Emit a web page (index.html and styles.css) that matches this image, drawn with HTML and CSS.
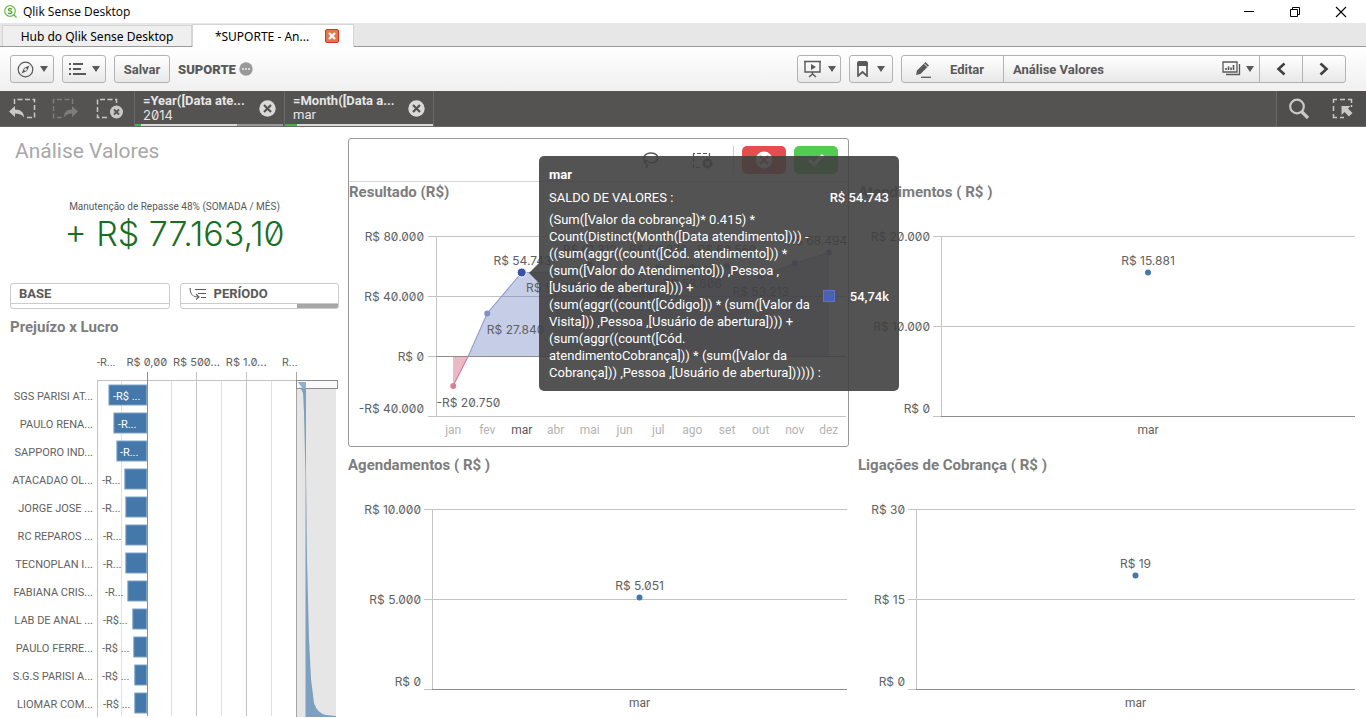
FILE: index.html
```html
<!DOCTYPE html>
<html lang="pt-BR">
<head>
<meta charset="utf-8">
<title>Qlik Sense Desktop</title>
<link rel="stylesheet" href="styles.css">
</head>
<body>
<header class="titlebar">
  <svg class="logo" width="13" height="13" viewBox="0 0 13 13"><circle cx="6" cy="6" r="5.3" fill="#fff" stroke="#6dbb45" stroke-width="1.2"/><path d="M9.5 9.5l3 3" stroke="#6dbb45" stroke-width="1.4"/><path d="M8 4.2C7 3.4 4.4 3.400 4.400 4.700 4.400 6.300 7.900 5.600 7.900 7.300 7.900 8.800 5.200 8.800 4 7.900" fill="none" stroke="#45a32b" stroke-width="1.3"/></svg>
  <span class="titlebar-text">Qlik Sense Desktop</span>
  <div class="window-controls">
    <button aria-label="Minimizar"><svg width="12" height="12"><path d="M1 5.500h10" stroke="#000"/></svg></button>
    <button aria-label="Restaurar"><svg width="12" height="12"><path d="M1.500 3.500h7v7h-7zM3.500 3.500v-2h7v7h-2" fill="none" stroke="#000"/></svg></button>
    <button aria-label="Fechar"><svg width="12" height="12"><path d="M1 1l10 10M11 1L1 11" stroke="#000" stroke-width="1.100"/></svg></button>
  </div>
</header>

<nav class="tabs">
  <a class="tab" href="#hub">Hub do Qlik Sense Desktop</a>
  <div class="tab tab-active"><a href="#suporte">*SUPORTE - An...</a>
    <button class="tab-close" aria-label="Fechar guia"><svg width="14" height="14"><rect x=".5" y=".5" width="13" height="13" rx="1.500" fill="#e5774f" stroke="#d9301f"/><path d="M4 4l6 6M10 4l-6 6" stroke="#fff" stroke-width="2.200"/></svg></button>
  </div>
</nav>

<div class="toolbar">
  <button class="btn btn-icon" aria-label="Navegação">
    <svg width="17" height="17"><circle cx="8.500" cy="8.500" r="7.300" fill="none" stroke="#595959" stroke-width="1.200"/><path d="M12.500 4.500L10 10 4.500 12.500 7 7z" fill="#595959"/><circle cx="8.500" cy="8.500" r="1.300" fill="#f8f8f8"/></svg>
    <svg class="caret" width="8" height="6"><path d="M0 0h8L4 6z"/></svg>
  </button>
  <button class="btn btn-icon" aria-label="Menu">
    <svg width="17" height="14"><path d="M0 2h2M0 7h2M0 12h2" stroke="#595959" stroke-width="2"/><path d="M4 2h10M4 7h8M4 12h13" stroke="#595959" stroke-width="2"/></svg>
    <svg class="caret" width="8" height="6"><path d="M0 0h8L4 6z"/></svg>
  </button>
  <button class="btn btn-text">Salvar</button>
  <strong class="app-name">SUPORTE</strong>
  <svg class="more" width="14" height="14"><circle cx="7" cy="7" r="6.700" fill="#999"/><path d="M3 7h8" stroke="#eee" stroke-width="1.500" stroke-dasharray="2 1"/></svg>
  <span class="spacer"></span>
  <button class="btn btn-icon" aria-label="Apresentação">
    <svg width="19" height="18"><path d="M1 1.500h17M2 2v10h15V2M9.500 12v3M6 17l3.500-3 3.500 3" fill="none" stroke="#595959" stroke-width="1.400"/><path d="M8 4l5 3-5 3z" fill="#595959"/></svg>
    <svg class="caret" width="8" height="6"><path d="M0 0h8L4 6z"/></svg>
  </button>
  <button class="btn btn-icon btn-bookmark" aria-label="Marcadores">
    <svg width="11" height="16"><path d="M1 3v12l4.500-4 4.500 4V3" fill="none" stroke="#595959" stroke-width="1.700"/><path d="M0 5V2q0-2 2-2h7q2 0 2 2v3z" fill="#595959"/></svg>
    <svg class="caret" width="8" height="6"><path d="M0 0h8L4 6z"/></svg>
  </button>
  <div class="btn-group">
    <button class="group-edit"><svg width="17" height="17"><path d="M1 14l1-4.500L10.500 1l3.500 3.500L5.500 13z" fill="#595959"/><path d="M9 2.500L12.500 6" stroke="#f8f8f8"/><path d="M6 16.300h10" stroke="#595959" stroke-width="1.300"/></svg>Editar</button>
    <button class="group-sheet"><span>Análise Valores</span>
      <svg width="20" height="16"><path d="M1 1h14v10H1zM4 13.500h13.500V3" fill="none" stroke="#595959" stroke-width="1.300"/><path d="M4 9V7M6.500 9V5.500M9 9V6.500M11.500 9V4" stroke="#595959" stroke-width="1.600"/></svg>
      <svg class="caret" width="8" height="6"><path d="M0 0h8L4 6z"/></svg></button>
    <button class="group-nav" aria-label="Anterior"><svg width="10" height="14"><path d="M8.500 1.500L2.500 7l6 5.500" fill="none" stroke="#404040" stroke-width="2.600"/></svg></button>
    <button class="group-nav" aria-label="Próxima"><svg width="10" height="14"><path d="M1.500 1.500L7.500 7l-6 5.500" fill="none" stroke="#404040" stroke-width="2.600"/></svg></button>
  </div>
</div>

<div class="selections">
  <div class="sel-tools">
    <button aria-label="Voltar seleção"><svg width="28" height="22"><path d="M6.500 6V1.500h20v18h-8" fill="none" stroke="#c8c8c8" stroke-width="1.500" stroke-dasharray="5 2.500"/><path d="M7 8v3.500c6 0 9 3 9 8-2-3-5-4-9-4V19L1 13.500z" fill="#c8c8c8"/></svg></button>
    <button aria-label="Avançar seleção"><svg width="28" height="22"><path d="M20.500 6V1.500h-19v18h8" fill="none" stroke="#7d7d7d" stroke-width="1.500" stroke-dasharray="5 2.500"/><path d="M20 8v3.500c-6 0-8 3-8 8 2-3 4-4 8-4V19l6-5.500z" fill="#7d7d7d"/></svg></button>
    <button aria-label="Limpar seleções"><svg width="28" height="22"><path d="M11 19.500H1.500v-18h19V6" fill="none" stroke="#c8c8c8" stroke-width="1.500" stroke-dasharray="5 2.500"/><circle cx="20.500" cy="14" r="6.500" fill="#c8c8c8"/><path d="M18 11.500l5 5M23 11.500l-5 5" stroke="#545352" stroke-width="1.800"/></svg></button>
  </div>
  <div class="sel-item sel-year">
    <div class="sel-text"><strong>=Year([Data ate...</strong><span class="num">2014</span></div>
    <button aria-label="Limpar ano"><svg width="17" height="17"><circle cx="8.500" cy="8.500" r="8.200" fill="#d9d9d9"/><path d="M5 5l7 7M12 5l-7 7" stroke="#545352" stroke-width="2.200"/></svg></button>
  </div>
  <div class="sel-item sel-month">
    <div class="sel-text"><strong>=Month([Data a...</strong><span>mar</span></div>
    <button aria-label="Limpar mês"><svg width="17" height="17"><circle cx="8.500" cy="8.500" r="8.200" fill="#d9d9d9"/><path d="M5 5l7 7M12 5l-7 7" stroke="#545352" stroke-width="2.200"/></svg></button>
  </div>
  <div class="sel-right">
    <button aria-label="Pesquisar"><svg width="22" height="22"><circle cx="9" cy="8.500" r="6.800" fill="none" stroke="#c8c8c8" stroke-width="2.200"/><path d="M13.500 13.500l6.500 6.500" stroke="#c8c8c8" stroke-width="3.200"/></svg></button>
    <button aria-label="Ferramenta de seleções"><svg width="22" height="22"><path d="M5 1.500H1.500V5M8 1.500h5M16 1.500h3.500V5M1.500 8v5M1.500 16v3.500H5M8 19.500h4M19.500 7v2" fill="none" stroke="#c8c8c8" stroke-width="1.500"/><path d="M9.500 8h9l-2.500 2.500 4.500 4.500-3.500 3.500-4.500-4.500-3 3z" fill="#c8c8c8"/></svg></button>
  </div>
</div>

<main class="sheet">
  <section class="col col-left">
    <h1>Análise Valores</h1>
    <div class="kpi">
      <div class="kpi-label">Manutenção de Repasse 48% (SOMADA / MÊS)</div>
      <div class="kpi-value num">+ R$ 77.163,10</div>
    </div>
    <div class="filters">
      <button class="filter">BASE</button>
      <button class="filter filter-period"><svg width="18" height="13"><path d="M1 1c0 6 2 9 9 9M7 7l3 3-3 2.500M6 2.500h11M9 6.500h8M12 10.500h5" fill="none" stroke="#595959" stroke-width="1.100"/></svg>PERÍODO</button>
    </div>
    <h2>Prejuízo x Lucro</h2>
    <div class="barchart">
      <svg class="bar-names" height="380">
        <g class="label end">
          <text x="83" y="63">SGS PARISI AT...</text><text x="83" y="91">PAULO RENA...</text><text x="83" y="119">SAPPORO IND...</text><text x="83" y="147">ATACADAO OL...</text><text x="83" y="175">JORGE JOSE ...</text><text x="83" y="203">RC REPAROS ...</text><text x="83" y="231">TECNOPLAN I...</text><text x="83" y="259">FABIANA CRIS...</text><text x="83" y="287">LAB DE ANAL ...</text><text x="83" y="315">PAULO FERRE...</text><text x="83" y="343">S.G.S PARISI A...</text><text x="83" y="371">LIOMAR COM...</text>
        </g>
      </svg>
      <svg class="bar-plot" height="380">
        <g class="crisp">
          <path d="M.5 43.500v336" class="grid"/>
          <line class="grid" x1="0" x2="100%" y1="43.500" y2="43.500"/>
          <g class="grid-minor"><line x1="12.500%" x2="12.500%" y1="44" y2="379"/><line x1="37.500%" x2="37.500%" y1="44" y2="379"/><line x1="62.500%" x2="62.500%" y1="44" y2="379"/><line x1="87.500%" x2="87.500%" y1="44" y2="379"/></g>
          <g class="grid"><line x1="50%" x2="50%" y1="35" y2="379"/><line x1="75%" x2="75%" y1="35" y2="379"/></g>
        </g>
        <g class="bar">
          <rect x="6%" y="48" width="19%" height="20"/><rect x="8.500%" y="76" width="16.500%" height="20"/><rect x="10%" y="104" width="15%" height="20"/><rect x="14%" y="132" width="11%" height="20"/><rect x="14.500%" y="160" width="10.500%" height="20"/><rect x="14.500%" y="188" width="10.500%" height="20"/><rect x="14.500%" y="216" width="10.500%" height="20"/><rect x="15.500%" y="244" width="9.500%" height="20"/><rect x="18%" y="272" width="7%" height="20"/><rect x="18.500%" y="300" width="6.500%" height="20"/><rect x="19%" y="328" width="6%" height="20"/><rect x="19%" y="356" width="6%" height="20"/>
        </g>
        <line class="zero crisp" x1="25.200%" x2="25.200%" y1="35" y2="379"/>
        <g class="label">
          <text x="0" y="29">-R...</text>
          <text class="mid num" x="25%" y="29">R$ 0,00</text><text class="mid num" x="50%" y="29">R$ 500...</text><text class="mid num" x="75%" y="29">R$ 1.0...</text><text x="93%" y="29">R...</text>
          <g class="inverse"><text x="8%" y="63">-R$ ...</text><text x="10.500%" y="91">-R...</text><text x="11.500%" y="119">-R...</text></g>
          <text x="2.500%" y="147">-R...</text><text x="2.500%" y="175">-R...</text><text x="3%" y="203">-R...</text><text x="3%" y="231">-R...</text><text x="4%" y="259">-R...</text><text x="3%" y="287">-R$...</text><text x="2.500%" y="315">-R$ ...</text><text x="2.500%" y="343">-R$ ...</text><text x="3%" y="371">-R$ ...</text>
        </g>
      </svg>
      <svg class="bar-map" height="380">
        <rect x="0" y="44" width="40" height="336" fill="#e6e6e6"/>
        <path d="M.5 35v345" stroke="#a6a6a6"/>
        <path d="M2 46h8v86l1 90 2 80 2 40 3 24q3 10 12 12l10 1v2H9.500V140L8 75 7 56z" fill="#7d9fc0"/>
        <rect x=".5" y="43.500" width="41" height="8" fill="#fff" fill-opacity=".8" stroke="#8c8c8c"/>
        <path d="M2 45h8v7H7z" fill="#8fb0d3"/>
      </svg>
    </div>
  </section>

  <section class="col col-mid">
    <div class="panel">
      <div class="panel-tools">
        <button aria-label="Laço"><svg width="18" height="17"><path d="M4 10C-1 5 4 1 9 1s8 3 6 7-8 3-10 1c-2-1-4 1-2 2s3 3 1 5" fill="none" stroke="#595959" stroke-width="1.600"/></svg></button>
        <button aria-label="Limpar"><svg width="22" height="17"><path d="M8 15.500H1.500v-14h16V5" fill="none" stroke="#595959" stroke-width="1.200" stroke-dasharray="4 2"/><circle cx="15.500" cy="11.500" r="5" fill="#595959"/><path d="M13.500 9.500l4 4M17.500 9.500l-4 4" stroke="#fff" stroke-width="1.500"/></svg></button>
        <span class="divider"></span>
        <button class="cancel" aria-label="Cancelar"><svg width="18" height="18"><circle cx="9" cy="9" r="8.500" fill="#fff"/><path d="M5 5l8 8M13 5l-8 8" stroke="#e84c4c" stroke-width="2"/></svg></button>
        <button class="confirm" aria-label="Confirmar"><svg width="18" height="16"><path d="M2 8l5 4.500L16 3" fill="none" stroke="#fff" stroke-width="3.200"/></svg></button>
      </div>
      <h2>Resultado (R$)</h2>
      <div class="chart">
        <svg class="axis axis-result" height="244">
          <path class="grid crisp" d="M79 34.500h8M79 94.500h8M79 154.500h8M79 214.500h8"/>
          <g class="label end num"><text x="75" y="39">R$ 80.000</text><text x="75" y="99">R$ 40.000</text><text x="75" y="159">R$ 0</text><text x="75" y="211">-R$ 40.000</text></g>
        </svg>
        <svg class="plot" height="244">
          <g class="grid crisp"><line x1=".5" x2=".5" y1="34" y2="215"/><line x1="0" x2="100%" y1="34.500" y2="34.500"/><line x1="0" x2="100%" y1="94.500" y2="94.500"/><line x1="0" x2="100%" y1="214.500" y2="214.500"/></g>
          <svg width="100%" height="244" viewBox="0 0 409 244" preserveAspectRatio="none">
            <path d="M17 154.500V184l15-29.500z" fill="#c94f70" fill-opacity=".4"/>
            <path d="M32 154.500L51 111.500 85.500 70.500 119.500 70 153.500 62.500 188 77.500 222 65 256 65 290 64 324 74 358 61.500 392 50.500V154.500z" fill="#4058ae" fill-opacity=".3"/>
            <path d="M17 184L32 154.500" stroke="#d9708c" fill="none"/>
            <path d="M32 154.500L51 111.500 85.500 70.500 119.500 70 153.500 62.500 188 77.500 222 65 256 65 290 64 324 74 358 61.500 392 50.500" stroke="#8c9bcf" fill="none"/>
          </svg>
          <line class="zero crisp" x1="0" x2="100%" y1="154.500" y2="154.500"/>
          <g fill="#8291c4"><circle cx="12.500%" cy="111.500" r="3"/><circle cx="29.200%" cy="70" r="3"/><circle cx="37.500%" cy="62.500" r="3"/><circle cx="46%" cy="77.500" r="3"/><circle cx="54.200%" cy="65" r="3"/><circle cx="62.500%" cy="65" r="3"/><circle cx="71%" cy="64" r="3"/><circle cx="79.200%" cy="74" r="3"/><circle cx="87.500%" cy="61.500" r="3"/><circle cx="95.800%" cy="50.500" r="3"/></g>
          <circle cx="4.200%" cy="184" r="3" fill="#d98096"/>
          <circle cx="20.900%" cy="70.500" r="4.500" fill="#3b51a3" stroke="#fff"/>
          <g class="label mid num"><text x="7.900%" y="205">-R$ 20.750</text><text x="19.400%" y="132">R$ 27.840</text><text x="21.100%" y="63">R$ 54.743</text><text x="29.200%" y="90">R$ 55.408</text><text x="37.500%" y="52">R$ 61.312</text><text x="46%" y="97">R$ 51.488</text><text x="54.200%" y="52">R$ 60.879</text><text x="62.500%" y="86">R$ 58.606</text><text x="71%" y="52">R$ 60.560</text><text x="79.200%" y="94">R$ 53.213</text><text x="93%" y="43">R$ 68.494</text></g>
          <g class="label mid muted"><text x="4.200%" y="232">jan</text><text x="12.500%" y="232">fev</text><text class="current" x="20.900%" y="232">mar</text><text x="29.200%" y="232">abr</text><text x="37.500%" y="232">mai</text><text x="46%" y="232">jun</text><text x="54.200%" y="232">jul</text><text x="62.500%" y="232">ago</text><text x="71%" y="232">set</text><text x="79.200%" y="232">out</text><text x="87.500%" y="232">nov</text><text x="95.800%" y="232">dez</text></g>
        </svg>
      </div>
      <div class="tooltip" role="tooltip">
        <strong>mar</strong>
        <div class="tip-row"><span>SALDO DE VALORES :</span><span class="tip-value">R$ 54.743</span></div>
        <div class="tip-row tip-formula"><span>(Sum([Valor da cobrança])* 0.415) *<br>Count(Distinct(Month([Data atendimento]))) -<br>((sum(aggr((count([Cód. atendimento])) *<br>(sum([Valor do Atendimento])) ,Pessoa ,<br>[Usuário de abertura]))) +<br>(sum(aggr((count([Código])) * (sum([Valor da<br>Visita])) ,Pessoa ,[Usuário de abertura]))) +<br>(sum(aggr((count([Cód.<br>atendimentoCobrança])) * (sum([Valor da<br>Cobrança])) ,Pessoa ,[Usuário de abertura]))))) :</span><i class="swatch"></i><span class="tip-value">54,74k</span></div>
      </div>
    </div>
    <h2 class="second">Agendamentos ( R$ )</h2>
    <div class="chart">
      <svg class="axis axis-agenda" height="236">
        <path class="grid crisp" d="M76 34.500h8M76 124.500h8M76 214.500h8"/>
        <g class="label end num"><text x="73" y="39">R$ 10.000</text><text x="73" y="129">R$ 5.000</text><text x="73" y="211">R$ 0</text></g>
      </svg>
      <svg class="plot" height="236">
        <g class="grid crisp"><line x1=".5" x2=".5" y1="34" y2="215"/><line x1="0" x2="100%" y1="34.500" y2="34.500"/><line x1="0" x2="100%" y1="124.500" y2="124.500"/></g>
        <line class="zero crisp" x1="0" x2="100%" y1="214.500" y2="214.500"/>
        <circle class="dot" cx="50%" cy="122.500" r="3"/>
        <g class="label mid"><text class="num" x="50%" y="115">R$ 5.051</text><text x="50%" y="232">mar</text></g>
      </svg>
    </div>
  </section>

  <section class="col col-right">
    <h2>Atendimentos ( R$ )</h2>
    <div class="chart">
      <svg class="axis axis-atend" height="245">
        <path class="grid crisp" d="M75 34.500h8M75 124.500h8M75 214.500h8"/>
        <g class="label end num"><text x="72" y="39">R$ 20.000</text><text x="72" y="129">R$ 10.000</text><text x="72" y="211">R$ 0</text></g>
      </svg>
      <svg class="plot" height="245">
        <g class="grid crisp"><line x1=".5" x2=".5" y1="34" y2="215"/><line x1="0" x2="100%" y1="34.500" y2="34.500"/><line x1="0" x2="100%" y1="124.500" y2="124.500"/></g>
        <line class="zero crisp" x1="0" x2="100%" y1="214.500" y2="214.500"/>
        <circle class="dot" cx="50%" cy="70.500" r="3"/>
        <g class="label mid"><text class="num" x="50%" y="63">R$ 15.881</text><text x="50%" y="232">mar</text></g>
      </svg>
    </div>
    <h2 class="second">Ligações de Cobrança ( R$ )</h2>
    <div class="chart">
      <svg class="axis axis-calls" height="236">
        <path class="grid crisp" d="M50 34.500h8M50 124.500h8M50 214.500h8"/>
        <g class="label end num"><text x="47" y="39">R$ 30</text><text x="47" y="129">R$ 15</text><text x="47" y="211">R$ 0</text></g>
      </svg>
      <svg class="plot" height="236">
        <g class="grid crisp"><line x1=".5" x2=".5" y1="34" y2="215"/><line x1="0" x2="100%" y1="34.500" y2="34.500"/><line x1="0" x2="100%" y1="124.500" y2="124.500"/></g>
        <line class="zero crisp" x1="0" x2="100%" y1="214.500" y2="214.500"/>
        <circle class="dot" cx="50%" cy="100.500" r="3"/>
        <g class="label mid"><text class="num" x="50%" y="93">R$ 19</text><text x="50%" y="232">mar</text></g>
      </svg>
    </div>
  </section>
</main>
</body>
</html>
```

FILE: styles.css
```css
* { box-sizing: border-box; }
body { margin: 0; height: 100vh; overflow: hidden; display: flex; flex-direction: column; background: #fff; color: #595959; font-family: Roboto, "Liberation Sans", sans-serif; font-size: 13px; }
button { margin: 0; padding: 0; border: 0; background: none; color: inherit; font: inherit; display: flex; align-items: center; justify-content: center; }
a { color: inherit; text-decoration: none; }
h1, h2 { margin: 0; }
svg { display: block; flex: none; }

.num { font-family: Inter, sans-serif; font-feature-settings: "zero" 1; }

.titlebar { flex: none; height: 23px; padding: 0 4px; display: flex; align-items: center; gap: 6px; color: #000; font: 12px "Open Sans", sans-serif; }
.titlebar-text { flex: 1; }
.window-controls { display: flex; gap: 34px; padding-right: 15px; }

.tabs { flex: none; height: 24px; padding: 1px 2px 0; display: flex; align-items: stretch; background: #e7e7e7; box-shadow: inset 0 -1px #999; color: #000; font: 12px "Noto Sans", sans-serif; }
.tab { width: 190px; margin: 1px 0; border: 1px solid #d4d4d4; border-bottom: 0; background: #efefef; display: flex; align-items: center; justify-content: center; white-space: nowrap; }
.tab-active { width: 162px; margin: 0; padding-left: 8px; background: #fff; gap: 16px; }

.toolbar { flex: none; height: 44px; padding: 0 20px 0 10px; display: flex; align-items: center; gap: 8px; background: linear-gradient(#fff, #f0f0f0); font-weight: 700; }
.btn, .btn-group { height: 28px; border: 1px solid #b3b3b3; border-radius: 3px; background: linear-gradient(#fff, #e8e8e8); }
.btn-icon { width: 44px; gap: 6px; }
.btn-bookmark { gap: 9px; }
.btn-text { width: 56px; }
.caret { fill: #595959; }
.more { margin-left: -5px; }
.spacer { flex: 1; }
.btn-group { width: 445px; display: flex; }
.btn-group button + button { border-left: 1px solid #b3b3b3; }
.group-edit { width: 101px; padding-right: 6px; gap: 18px; }
.group-sheet { flex: 1; padding: 0 5px 0 9px; gap: 4px; }
.group-sheet span { flex: 1; text-align: left; }
.group-nav { width: 43px; }

.selections { flex: none; height: 36px; display: flex; background: #545352; border-bottom: 1px solid #6a6a6a; color: #e6e6e6; }
.sel-tools { width: 134px; padding: 0 8px; display: flex; align-items: center; gap: 16px; }
.sel-item { width: 150px; padding: 1px 8px 2px 8px; display: flex; align-items: center; justify-content: space-between; border-left: 1px solid #6b6a69; background-repeat: no-repeat; background-position: 0 100%; background-size: 148px 2px; white-space: nowrap; }
.sel-year { background-image: linear-gradient(90deg, #3fb54a 6px, #d9d9d9 6px 102px, #999 102px); }
.sel-month { background-image: linear-gradient(90deg, #3fb54a 12px, #d9d9d9 12px); border-right: 1px solid #6b6a69; }
.sel-text { display: flex; flex-direction: column; line-height: 14px; }
.sel-right { margin-left: auto; width: 90px; padding-left: 11px; display: flex; align-items: center; gap: 22px; border-left: 1px solid #6b6a69; background: #4f4e4d; }

.sheet { flex: 1; min-height: 0; padding: 0 10px; display: grid; grid-template-columns: 329fr 501fr 498fr; gap: 9px; }
.col { min-width: 0; }
h1 { height: 72px; padding: 8px 5px 0; color: #a8a8a8; font-size: 21px; line-height: 32px; font-weight: 400; }
h2 { color: #7d7d7d; font-size: 15px; line-height: 20px; font-weight: 700; white-space: nowrap; }

.kpi { height: 84px; text-align: center; white-space: nowrap; }
.kpi-label { font-size: 10px; line-height: 16px; }
.kpi-value { color: #1a6e1f; font-size: 34px; line-height: 38px; font-weight: 300; }
.filters { display: grid; grid-template-columns: 1fr 1fr; gap: 10px; margin-bottom: 8px; }
.filter { height: 26px; padding: 0 8px 5px; justify-content: flex-start; gap: 7px; border: 1px solid #ccc; border-radius: 3px; background: linear-gradient(#ccc, #ccc) 0 19px / 100% 1px no-repeat; font-weight: 700; }
.filter-period { background: linear-gradient(#a6a6a6, #a6a6a6) 100% 100% / 41px 4px no-repeat, linear-gradient(#ccc, #ccc) 0 19px / 100% 1px no-repeat; }

.barchart { display: flex; }
.bar-names { width: 87px; }
.bar-plot { flex: 1; width: 0; min-width: 0; overflow: visible; }
.bar-map { width: 43px; }

.label { font-size: 12px; fill: #616161; }
.bar-plot .label, .bar-names .label { font-size: 11px; }
.end { text-anchor: end; }
.mid { text-anchor: middle; }
.muted { fill: #b3b3b3; }
.muted .current { fill: #595959; }
.inverse { fill: #fff; }
.grid { stroke: #c4c4c4; fill: none; }
.grid-minor { stroke: #e0e0e0; }
.zero { stroke: #8c8c8c; }
.crisp { shape-rendering: crispEdges; }
.bar { fill: #4477aa; stroke: #7fa3c7; stroke-width: 1px; }
.dot { fill: #4477aa; }

.col-mid { padding-top: 11px; }
.col-right { padding-top: 55px; }
.panel { position: relative; border: 1px solid #999; border-radius: 3px; }
.panel-tools { height: 43px; padding-right: 10px; display: flex; align-items: center; justify-content: flex-end; border-bottom: 1px solid #d4d4d4; gap: 8px; }
.panel-tools button { width: 44px; height: 28px; border-radius: 5px; }
.panel-tools .divider { width: 1px; height: 28px; background: #ccc; }
.cancel { background: #e84c4c; }
.confirm { background: #52cc52; }
.second { margin-top: 8px; }

.chart { display: flex; padding-right: 2px; }
.col-right .chart { padding-right: 1px; }
.axis-result { width: 87px; }
.axis-agenda { width: 84px; }
.axis-atend { width: 83px; }
.axis-calls { width: 58px; }
.plot { flex: 1; width: 0; min-width: 0; overflow: visible; }

.tooltip { position: absolute; z-index: 2; left: 190px; top: 17px; width: 360px; padding: 10px; border-radius: 5px; background: rgba(64, 64, 64, .9); color: #fff; font-size: 13px; line-height: 17px; white-space: nowrap; }
.tooltip::before { content: ""; position: absolute; left: -10px; top: 107px; border: 10px solid transparent; border-right-color: rgba(64, 64, 64, .9); border-left-width: 0; }
.tooltip strong { display: block; }
.tip-row { display: flex; align-items: center; margin-top: 6px; }
.tip-formula { margin-top: 5px; }
.tip-row > span:first-child { flex: 1; }
.tip-value { width: 66px; text-align: right; font-weight: 500; }
.swatch { width: 12px; height: 12px; background: #4c61b0; border: 1px solid #5a73cf; margin-right: -12px; }
```
